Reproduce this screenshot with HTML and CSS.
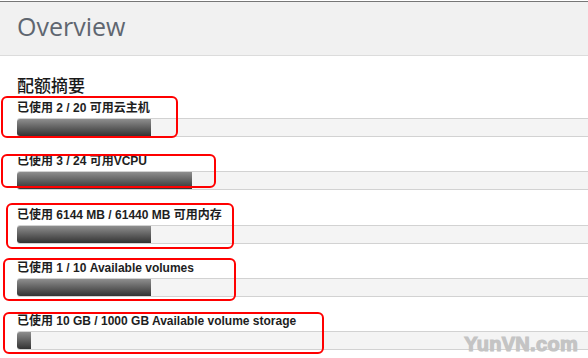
FILE: index.html
```html
<!DOCTYPE html>
<html lang="zh">
<head>
    <meta charset="UTF-8">
    <title>Overview</title>
    <link rel="stylesheet" href="styles.css">
</head>
<body>
    <div class="page">
        <header class="page-header">
            <h1>Overview</h1>
        </header>

        <section class="quota-summary">
            <h2>配额摘要</h2>

            <div class="quota">
                <p class="quota-label">已使用 2 / 20 可用云主机</p>
                <div class="bar"><div class="bar-fill" style="width: 134px"></div></div>
            </div>

            <div class="quota">
                <p class="quota-label">已使用 3 / 24 可用VCPU</p>
                <div class="bar"><div class="bar-fill" style="width: 175px"></div></div>
            </div>

            <div class="quota">
                <p class="quota-label">已使用 6144 MB / 61440 MB 可用内存</p>
                <div class="bar"><div class="bar-fill" style="width: 134px"></div></div>
            </div>

            <div class="quota">
                <p class="quota-label">已使用 1 / 10 Available volumes</p>
                <div class="bar"><div class="bar-fill" style="width: 134px"></div></div>
            </div>

            <div class="quota">
                <p class="quota-label">已使用 10 GB / 1000 GB Available volume storage</p>
                <div class="bar"><div class="bar-fill" style="width: 14px"></div></div>
            </div>
        </section>

        <!-- hand drawn annotations -->
        <div class="mark mark-1"></div>
        <div class="mark mark-2"></div>
        <div class="mark mark-3"></div>
        <div class="mark mark-4"></div>
        <div class="mark mark-5"></div>

        <div class="watermark">YunVN.com</div>
    </div>
</body>
</html>
```

FILE: styles.css
```css
* {
    box-sizing: border-box;
    margin: 0;
    padding: 0;
}

html, body {
    background: #fff;
    overflow: hidden;
}

body {
    font-family: 'Liberation Sans', 'Noto Sans CJK SC', sans-serif;
    color: #222;
}

.page {
    position: relative;
    width: 588px;
    height: 358px;
    overflow: hidden;
    padding-top: 1px;
}

.page-header {
    height: 55px;
    background: #f1f1f1;
    border-top: 1px solid #777;
    border-bottom: 1px solid #dcdcdc;
    padding: 7px 0 0 17px;
}

.page-header h1 {
    font-family: 'Open Sans', sans-serif;
    font-weight: 400;
    font-size: 25px;
    line-height: 34px;
    color: #5f6670;
}

.quota-summary {
    padding-left: 17px;
}

.quota-summary h2 {
    font-family: 'Noto Sans CJK SC', sans-serif;
    font-weight: 500;
    font-size: 17px;
    line-height: 20px;
    color: #1a1a1a;
    margin-top: 19px;
    margin-bottom: 6px;
}

.quota {
    margin-bottom: 17.3px;
}

.quota-label {
    font-size: 12px;
    font-weight: 700;
    line-height: 14px;
    color: #1e1e1e;
    margin-bottom: 3px;
}

.bar {
    width: 1400px;
    height: 19px;
    background: #f4f4f4;
    border-top: 1px solid #d2d2d2;
    border-bottom: 1px solid #d2d2d2;
    border-radius: 3px 0 0 3px;
}

.bar-fill {
    height: 17px;
    background: linear-gradient(to bottom, #8e8e8e, #333);
    border-radius: 3px 0 0 3px;
}

.mark {
    position: absolute;
    border: 2px solid #f00;
    border-radius: 6px;
}

.mark-1 { left: 1px; top: 96px; width: 177px; height: 42px; }
.mark-2 { left: 1px; top: 154px; width: 215px; height: 34px; }
.mark-3 { left: 6px; top: 203px; width: 228px; height: 46px; }
.mark-4 { left: 3px; top: 258px; width: 233px; height: 43px; }
.mark-5 { left: 3px; top: 312px; width: 321px; height: 42px; }

.watermark {
    position: absolute;
    right: 10px;
    top: 334px;
    font-family: 'Liberation Sans', sans-serif;
    font-size: 20px;
    line-height: 20px;
    font-weight: 700;
    letter-spacing: 0.3px;
    color: #c4c4c4;
    -webkit-text-stroke: 1.2px #c4c4c4;
}
```
